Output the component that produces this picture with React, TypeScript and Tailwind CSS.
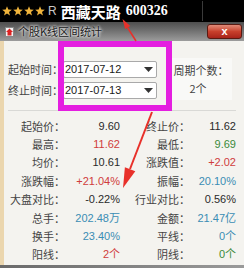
import React from "react";

type Stat = { label: string; value: string; tone?: "red" | "green" | "blue" };

const rows: [Stat, Stat][] = [
  [{ label: "起始价：", value: "9.60" }, { label: "终止价：", value: "11.62" }],
  [{ label: "最高：", value: "11.62", tone: "red" }, { label: "最低：", value: "9.69", tone: "green" }],
  [{ label: "均价：", value: "10.61" }, { label: "涨跌值：", value: "+2.02", tone: "red" }],
  [{ label: "涨跌幅：", value: "+21.04%", tone: "red" }, { label: "振幅：", value: "20.10%", tone: "blue" }],
  [{ label: "大盘对比：", value: "-0.22%" }, { label: "行业对比：", value: "0.56%" }],
  [{ label: "总手：", value: "202.48万", tone: "blue" }, { label: "金额：", value: "21.47亿", tone: "blue" }],
  [{ label: "换手：", value: "23.40%", tone: "blue" }, { label: "平线：", value: "0个", tone: "blue" }],
  [{ label: "阳线：", value: "2个", tone: "red" }, { label: "阴线：", value: "0个", tone: "green" }],
];

const toneClass = (t?: Stat["tone"]) =>
  t === "red" ? "text-[#d03c3c]" : t === "green" ? "text-[#3a8a3a]" : t === "blue" ? "text-[#3a8db4]" : "text-[#2a2a2a]";

function Star() {
  return (
    <svg width="10" height="10" viewBox="0 0 10 10">
      <polygon points="5,0.3 6.3,3.6 9.8,3.7 7,5.9 8,9.5 5,7.4 2,9.5 3,5.9 0.2,3.7 3.7,3.6" fill="#f0b43c" />
    </svg>
  );
}

function DateSelect({ value }: { value: string }) {
  return (
    <div className="w-[94px] h-[17px] bg-white border border-[#a9a9a9] rounded-[2px] flex items-center justify-between pl-[1px] pr-[3px]">
      <span className="text-[11px] leading-none text-[#1a1a1a] font-['Liberation_Sans',sans-serif]">{value}</span>
      <svg width="9" height="5" viewBox="0 0 9 5">
        <polygon points="0,0 9,0 4.5,5" fill="#333" />
      </svg>
    </div>
  );
}

export default function App() {
  return (
    <div className="relative w-[244px] h-[268px] overflow-hidden bg-[#f4f3ef] flex flex-col font-['Noto_Sans_CJK_SC',sans-serif]">
      {/* quote bar */}
      <div className="h-[22px] bg-black flex items-center pl-[2px] shrink-0">
        <div className="flex gap-[1px]">
          <Star />
          <Star />
          <Star />
          <Star />
        </div>
        <span className="ml-[3px] text-[12px] leading-none text-[#c8c8c8] font-['Liberation_Sans',sans-serif]">R</span>
        <span className="ml-[4px] text-[15px] leading-none font-bold text-white">西藏天路</span>
        <span className="ml-[5px] text-[14px] leading-none font-bold text-white font-['Liberation_Serif',serif]">600326</span>
        <div className="ml-[34px] w-px h-[20px] bg-[#3a3a3a]" />
      </div>

      {/* window title */}
      <div className="h-[19px] shrink-0 flex items-center bg-gradient-to-b from-[#4e4e4e] to-[#9c9c9c] pl-[5px] pr-[2px]">
        <svg width="9" height="10" viewBox="0 0 9 10">
          <rect x="0.5" y="0.5" width="8" height="9" fill="#f2f2f2" stroke="#888" />
          <polygon points="4.5,1.5 8,5 1,5" fill="#d22" />
          <rect x="2.5" y="5" width="4" height="3.5" fill="#d22" />
        </svg>
        <span className="ml-[4px] text-[11px] leading-none text-[#1c1c1c] [text-shadow:0_0_3px_#fff,0_0_3px_#fff]">个股K线区间统计</span>
        <div className="ml-auto w-[35px] h-[15px] rounded-[3px] border border-[#5a1a12] bg-gradient-to-b from-[#e08a78] via-[#c8402c] to-[#a8231a] flex items-center justify-center">
          <span className="text-[11px] leading-none font-bold text-white font-['Liberation_Sans',sans-serif]">x</span>
        </div>
      </div>

      <div className="flex flex-1">
        <div className="w-[4px] bg-[#ebd6ae]" />
        <div className="flex-1 flex flex-col">
          {/* date range */}
          <div className="h-[69px] flex pt-[20px] pl-[4px]">
            <div className="flex flex-col gap-[4px]">
              <div className="flex items-center">
                <span className="w-[55px] text-[11px] leading-none text-[#444]">起始时间：</span>
                <DateSelect value="2017-07-12" />
              </div>
              <div className="flex items-center">
                <span className="w-[55px] text-[11px] leading-none text-[#444]">终止时间：</span>
                <DateSelect value="2017-07-13" />
              </div>
            </div>
            <div className="ml-[13px] -mt-[3px] w-[62px] h-[42px] bg-[#f9f9f7] flex flex-col items-center justify-center gap-[7px]">
              <span className="text-[11px] leading-none text-[#444]">周期个数：</span>
              <span className="text-[11px] leading-none text-[#444] pr-[6px]">2个</span>
            </div>
          </div>

          <div className="h-px bg-[#d9d9d6] ml-[4px] mr-[8px]" />

          {/* stats */}
          <div className="pt-[6px] grid grid-cols-[61px_55px_70px_46px]">
            {rows.map(([a, b], i) => (
              <React.Fragment key={i}>
                <div className="h-[18.4px] flex items-center justify-end text-[11px] leading-none text-[#444]">{a.label}</div>
                <div className={`h-[18.4px] flex items-center justify-end text-[11px] leading-none font-['Liberation_Sans','Noto_Sans_CJK_SC',sans-serif] ${toneClass(a.tone)}`}>{a.value}</div>
                <div className="h-[18.4px] flex items-center justify-end text-[11px] leading-none text-[#444]">{b.label}</div>
                <div className={`h-[18.4px] flex items-center justify-end text-[11px] leading-none font-['Liberation_Sans','Noto_Sans_CJK_SC',sans-serif] ${toneClass(b.tone)}`}>{b.value}</div>
              </React.Fragment>
            ))}
          </div>
        </div>
      </div>

      <div className="h-[3px] shrink-0 bg-gradient-to-r from-[#6a6a6a] to-[#9a9a9a]" />

      {/* annotations */}
      <div className="absolute left-[58px] top-[41px] w-[114px] h-[70px] border-[6px] border-[#e41ee0]" />
      <svg className="absolute inset-0 pointer-events-none" width="244" height="268" viewBox="0 0 244 268">
        <line x1="136" y1="41" x2="127.5" y2="27.5" stroke="#e8302a" strokeWidth="1.5" />
        <polygon points="122.5,19 130.3,25.9 125.1,29.1" fill="#e8302a" />
        <line x1="152" y1="112" x2="130" y2="169" stroke="#e8302a" strokeWidth="2" />
        <polygon points="123,188 135.3,171.3 124.9,167.3" fill="#e8302a" />
      </svg>
    </div>
  );
}
